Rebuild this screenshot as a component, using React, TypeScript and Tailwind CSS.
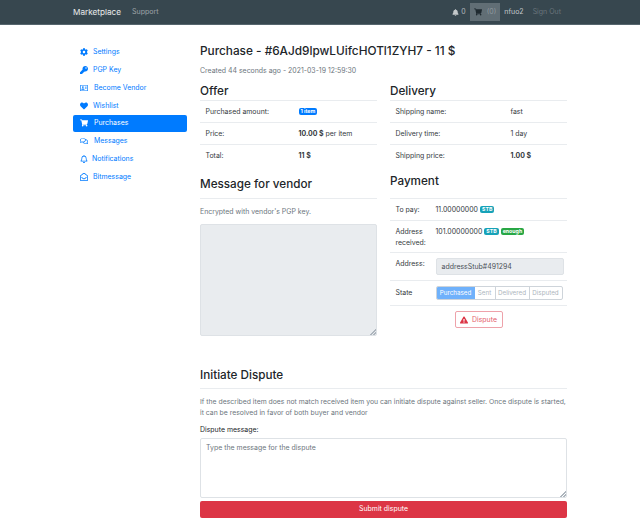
import type { ReactNode } from "react";
import {
  FaBell,
  FaCog,
  FaExclamationTriangle,
  FaHeart,
  FaKey,
  FaRegAddressCard,
  FaRegBell,
  FaRegComments,
  FaRegEnvelopeOpen,
  FaShoppingCart,
} from "react-icons/fa";

const sideItems = [
  { icon: <FaCog />, label: "Settings", gap: "gap-[5px]" },
  { icon: <FaKey />, label: "PGP Key", gap: "gap-[5px]" },
  { icon: <FaRegAddressCard />, label: "Become Vendor", gap: "gap-[6px]" },
  { icon: <FaHeart />, label: "Wishlist", gap: "gap-[5px]" },
  { icon: <FaShoppingCart />, label: "Purchases", gap: "gap-[6px]", active: true },
  { icon: <FaRegComments />, label: "Messages", gap: "gap-[6px]" },
  { icon: <FaRegBell />, label: "Notifications", gap: "gap-[4px]" },
  { icon: <FaRegEnvelopeOpen />, label: "Bitmessage", gap: "gap-[5px]" },
];

// the native grip is far too big at this scale, so keep only its corner
const resizer =
  "[&::-webkit-resizer]:bg-[linear-gradient(135deg,transparent_80%,#adb5bd_80%,#adb5bd_85%,transparent_85%,transparent_90%,#adb5bd_90%,#adb5bd_95%,transparent_95%)]";

const Badge = ({ color, children }: { color: string; children: ReactNode }) => (
  <span className={`inline-block rounded-[2px] px-[2px] text-[5.25px] leading-[7px] font-bold text-white align-[1px] ${color}`}>
    {children}
  </span>
);

const Row = ({ label, width, children, last }: { label: string; width: string; children: ReactNode; last?: boolean }) => (
  <div className={`flex h-[22px] items-center pl-[5.5px] ${last ? "" : "border-b border-[#e9ecef] pt-[1px]"}`}>
    <div className={`shrink-0 ${width}`}>{label}</div>
    <div>{children}</div>
  </div>
);

const Heading = ({ children }: { children: ReactNode }) => (
  <h3 className="pt-[2px] text-[11.7px] leading-[15px] font-medium text-[#212529]">{children}</h3>
);

const App = () => {
  return (
    <div className="min-h-[532px] bg-white text-[6.95px] leading-[12px] text-[#343a40] [font-family:Inter,'Liberation_Sans',sans-serif]">
      <nav className="flex h-[25px] items-center border-b border-[#56666e] bg-[#37474f] pl-[73px] pr-[79px]">
        <span className="text-[8.2px] text-white/90">Marketplace</span>
        <span className="ml-[11px] text-[7px] text-white/50">Support</span>
        <div className="ml-auto flex items-center text-[7px] text-white/60">
          <FaBell className="mr-[2px] h-[7px] w-[7px] text-white/70" />
          <span>0</span>
          <div className="ml-[4px] flex h-[18px] items-center gap-[5px] bg-[#616e75] px-[4px] text-white/30">
            <FaShoppingCart className="h-[8px] w-[8px] text-[#1f2a30]" />
            <span>(0)</span>
          </div>
          <span className="ml-[4px] text-white/70">nfuo2</span>
          <span className="ml-[9px] text-white/25">Sign Out</span>
        </div>
      </nav>

      <div className="flex pl-[73px] pr-[73px] pt-[16px]">
        <aside className="mr-[13px] mt-[2.5px] w-[114px] shrink-0">
          {sideItems.map((item) => (
            <div
              key={item.label}
              className={`flex h-[17.75px] items-center rounded-[2px] pl-[7px] ${item.gap} ${item.active ? "bg-[#007bff] text-white" : "text-[#007bff]"}`}
            >
              <span className="flex w-[8px] justify-center text-[8px]">{item.icon}</span>
              <span>{item.label}</span>
            </div>
          ))}
        </aside>

        <main className="w-[367px] shrink-0">
          <h3 className="pt-[3px] text-[11.8px] leading-[15px] font-medium text-[#212529]">Purchase - #6AJd9lpwLUifcHOTl1ZYH7 - 11 $</h3>
          <p className="mt-[6px] text-[#6c757d]">Created 44 seconds ago - 2021-03-19 12:59:30</p>

          <div className="mt-[5px] grid grid-cols-2 gap-x-[13px]">
            <div>
              <Heading>Offer</Heading>
              <div className="mt-[1px] border-t border-[#e9ecef]">
                <Row label="Purchased amount:" width="w-[93px]">
                  <Badge color="bg-[#007bff]">1 item</Badge>
                </Row>
                <Row label="Price:" width="w-[93px]">
                  <b>10.00 $</b> per item
                </Row>
                <Row label="Total:" width="w-[93px]" last>
                  <b>11 $</b>
                </Row>
              </div>

              <div className="mt-[8px]">
                <Heading>Message for vendor</Heading>
                <div className="mt-[6px] border-t border-[#e9ecef] pt-[7px] text-[#6c757d]">Encrypted with vendor's PGP key.</div>
                <textarea
                  disabled
                  className={`mt-[6px] block h-[112px] w-full rounded-[2px] border border-[#dee2e6] bg-[#e9ecef] ${resizer}`}
                />
              </div>
            </div>

            <div>
              <Heading>Delivery</Heading>
              <div className="mt-[1px] border-t border-[#e9ecef]">
                <Row label="Shipping name:" width="w-[115px]">fast</Row>
                <Row label="Delivery time:" width="w-[115px]">1 day</Row>
                <Row label="Shipping price:" width="w-[115px]" last>
                  <b>1.00 $</b>
                </Row>
              </div>

              <div className="mt-[5px]">
                <Heading>Payment</Heading>
                <div className="mt-[9px] border-t border-[#e9ecef]">
                  <Row label="To pay:" width="w-[40px]">
                    11.00000000 <Badge color="bg-[#17a2b8]">STB</Badge>
                  </Row>
                  <div className="flex h-[32px] border-b border-[#e9ecef] pl-[5.5px] pt-[5px]">
                    <div className="w-[40px] shrink-0 leading-[11px]">Address received:</div>
                    <div className="leading-[11px]">
                      101.00000000 <Badge color="bg-[#17a2b8]">STB</Badge> <Badge color="bg-[#28a745]">enough</Badge>
                    </div>
                  </div>
                  <div className="flex h-[28px] border-b border-[#e9ecef] pl-[5.5px] pt-[5px]">
                    <div className="w-[40px] shrink-0">Address:</div>
                    <div className="flex h-[17px] w-[128px] items-center rounded-[2px] border border-[#dee2e6] bg-[#e9ecef] pl-[5px] text-[#495057]">
                      addressStub#491294
                    </div>
                  </div>
                  <div className="flex h-[25px] items-center border-b border-[#e9ecef] pl-[5.5px]">
                    <div className="w-[40px] shrink-0">State</div>
                    <div className="flex h-[14px] w-[127px] items-stretch overflow-hidden rounded-[2px] border border-[#ced4da] text-center text-[6.25px] leading-[12px] text-[#adb5bd]">
                      <span className="w-[38px] bg-[#6fb1fb] text-white">Purchased</span>
                      <span className="w-[21px] border-r border-[#ced4da]">Sent</span>
                      <span className="w-[34px] border-r border-[#ced4da]">Delivered</span>
                      <span className="flex-1">Disputed</span>
                    </div>
                  </div>
                </div>
                <div className="mt-[5px] flex justify-center">
                  <button className="flex h-[17px] w-[48px] items-center justify-center gap-[4px] rounded-[2px] border border-[#eea2aa] text-[#e4606d]">
                    <FaExclamationTriangle className="h-[8px] w-[8px] text-[#dc3545]" />
                    Dispute
                  </button>
                </div>
              </div>
            </div>
          </div>

          <section className="mt-[30px]">
            <Heading>Initiate Dispute</Heading>
            <div className="mt-[5px] border-t border-[#e9ecef] pt-[7px] text-[6.85px] leading-[11px] text-[#6c757d]">
              If the described item does not match received item you can initiate dispute against seller. Once dispute is started, it can be resolved in favor of both buyer and vendor
            </div>
            <label className="mt-[5.6px] block text-[#212529]">Dispute message:</label>
            <textarea
              placeholder="Type the message for the dispute"
              className={`mt-[2px] block h-[60px] w-full rounded-[2px] border border-[#dee2e6] px-[5px] py-[3px] placeholder:text-[#6c757d] ${resizer}`}
            />
            <button className="mt-[3px] block h-[17px] w-full rounded-[2px] bg-[#dc3545] text-white">Submit dispute</button>
          </section>
        </main>
      </div>
    </div>
  );
};

export default App;
